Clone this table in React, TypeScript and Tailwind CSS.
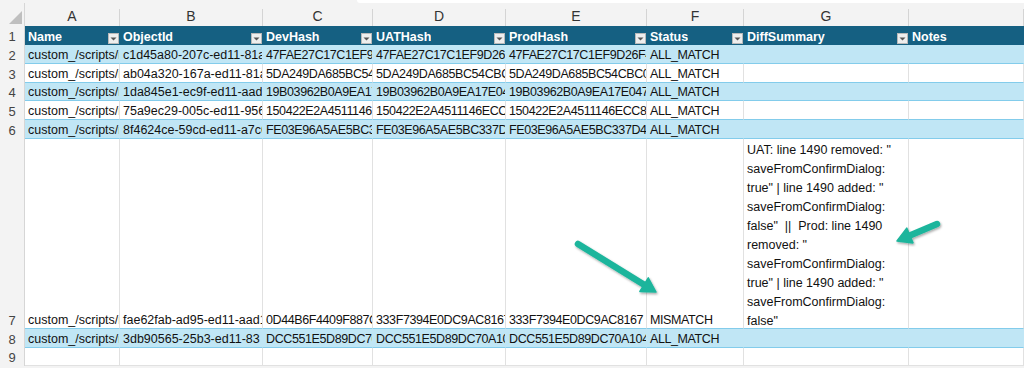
import React from 'react';

const COLS = 'grid grid-cols-[25px_95px_143px_110px_133px_141px_97px_165px_115px]';

const headers = ['Name', 'ObjectId', 'DevHash', 'UATHash', 'ProdHash', 'Status', 'DiffSummary', 'Notes'];
const letters = ['A', 'B', 'C', 'D', 'E', 'F', 'G', ''];

const diffLines = [
  'UAT: line 1490 removed: "',
  'saveFromConfirmDialog:',
  'true" | line 1490 added: "',
  'saveFromConfirmDialog:',
  'false"  ||  Prod: line 1490',
  'removed: "',
  'saveFromConfirmDialog:',
  'true" | line 1490 added: "',
  'saveFromConfirmDialog:',
  'false"',
];

type Row = { n: number; band: boolean; tall?: boolean; guid: string; dev: string; uat: string; prod: string; status: string };

const rows: Row[] = [
  { n: 2, band: true, guid: 'c1d45a80-207c-ed11-81ac', dev: '47FAE27C17C1EF9D', uat: '47FAE27C17C1EF9D26F', prod: '47FAE27C17C1EF9D26F4A', status: 'ALL_MATCH' },
  { n: 3, band: false, guid: 'ab04a320-167a-ed11-81ac', dev: '5DA249DA685BC54C', uat: '5DA249DA685BC54CBC', prod: '5DA249DA685BC54CBC0E', status: 'ALL_MATCH' },
  { n: 4, band: true, guid: '1da845e1-ec9f-ed11-aad1', dev: '19B03962B0A9EA17', uat: '19B03962B0A9EA17E04', prod: '19B03962B0A9EA17E047C', status: 'ALL_MATCH' },
  { n: 5, band: false, guid: '75a9ec29-005c-ed11-9562', dev: '150422E2A4511146', uat: '150422E2A4511146ECC', prod: '150422E2A4511146ECC8A', status: 'ALL_MATCH' },
  { n: 6, band: true, guid: '8f4624ce-59cd-ed11-a7c6', dev: 'FE03E96A5AE5BC33', uat: 'FE03E96A5AE5BC337D4', prod: 'FE03E96A5AE5BC337D4F1', status: 'ALL_MATCH' },
  { n: 7, band: false, tall: true, guid: 'fae62fab-ad95-ed11-aad1', dev: '0D44B6F4409F887C', uat: '333F7394E0DC9AC8167', prod: '333F7394E0DC9AC8167', status: 'MISMATCH' },
  { n: 8, band: true, guid: '3db90565-25b3-ed11-83', dev: 'DCC551E5D89DC70A', uat: 'DCC551E5D89DC70A10', prod: 'DCC551E5D89DC70A1047', status: 'ALL_MATCH' },
];

function FilterButton() {
  return (
    <div className="w-[11px] h-[11px] shrink-0 mr-[1px] mb-[1px] bg-[#eeeeee] border border-[#b9b9b9] flex items-center justify-center">
      <svg width="7" height="4" viewBox="0 0 7 4">
        <path d="M0.5 0.5 L6.5 0.5 L3.5 3.5 Z" fill="#555" />
      </svg>
    </div>
  );
}

function RowNum({ n, h }: { n: number | string; h: string }) {
  return (
    <div className={`${h} bg-[#f3f3f3] border-r border-[#d6d6d6] flex items-end justify-center text-[13px] leading-[16px] text-[#444]`}>
      {n}
    </div>
  );
}

function Cell({
  text,
  band,
  h,
  tight = false,
  bottom = 'border-b-[#83cceb]',
}: {
  text: React.ReactNode;
  band: boolean;
  h: string;
  tight?: boolean;
  bottom?: string;
}) {
  return (
    <div
      className={`${h} border-r border-b ${bottom} ${band ? 'bg-[#c0e6f5] border-r-transparent' : 'bg-white border-r-[#e1e1e1]'} ${tight ? 'tracking-[-0.4px]' : ''} flex items-end pl-[3px] overflow-hidden whitespace-nowrap text-[12.5px] leading-[16px] text-[#111]`}
    >
      {text}
    </div>
  );
}

function Arrow({ x1, y1, x2, y2 }: { x1: number; y1: number; x2: number; y2: number }) {
  const dx = x2 - x1;
  const dy = y2 - y1;
  const len = Math.hypot(dx, dy);
  const ux = dx / len;
  const uy = dy / len;
  const head = 14;
  const half = 8;
  const bx = x2 - ux * head;
  const by = y2 - uy * head;
  const pts = `${x2},${y2} ${bx - uy * half},${by + ux * half} ${bx + uy * half},${by - ux * half}`;
  return (
    <g filter="url(#shadow)">
      <line x1={x1} y1={y1} x2={bx + ux * 2} y2={by + uy * 2} stroke="#1db59c" strokeWidth="6.5" strokeLinecap="round" />
      <polygon points={pts} fill="#1db59c" strokeLinejoin="round" stroke="#1db59c" strokeWidth="1.5" />
    </g>
  );
}

export default function App() {
  return (
    <div className="w-[1024px] h-[368px] bg-white relative overflow-hidden font-['Liberation_Sans',Arial,sans-serif]">
      {/* formula bar edge */}
      <div className="h-[3px] bg-[#f3f3f3] flex">
        <div className="ml-[357px] flex-1 bg-white rounded-bl-[3px]" />
      </div>

      {/* column letters */}
      <div className={`${COLS} h-[23px] bg-[#f3f3f3]`}>
        <div className="flex items-end justify-end border-r border-[#d6d6d6] pr-[2px] pb-[3px]">
          <svg width="13" height="13" viewBox="0 0 13 13">
            <path d="M13 0 L13 13 L0 13 Z" fill="#bfbfbf" />
          </svg>
        </div>
        {letters.map((l, i) => (
          <div key={i} className="flex">
            <div className="flex-1 flex items-center justify-center pt-[3px] text-[14px] text-[#333]">{l}</div>
            <div className="w-px self-end h-[18px] bg-[#d4d4d4]" />
          </div>
        ))}
      </div>

      {/* table header row */}
      <div className={COLS}>
        <RowNum n={1} h="h-[19px]" />
        {headers.map((t, i) => (
          <div key={t} className="h-[19px] bg-[#156082] flex items-end justify-between pl-[3px] text-white font-bold text-[12.5px] leading-[16px] whitespace-nowrap overflow-hidden">
            <span className="overflow-hidden">{t}</span>
            {i < 7 && <FilterButton />}
          </div>
        ))}
      </div>

      {rows.map((r) => {
        const h = r.tall ? 'h-[190px]' : r.n === 4 ? 'h-[18px]' : 'h-[19px]';
        return (
          <div key={r.n} className={COLS}>
            <RowNum n={r.n} h={h} />
            <Cell h={h} band={r.band} text="custom_/scripts/m" />
            <Cell h={h} band={r.band} text={r.guid} />
            <Cell h={h} band={r.band} tight text={r.dev} />
            <Cell h={h} band={r.band} tight text={r.uat} />
            <Cell h={h} band={r.band} tight text={r.prod} />
            <Cell h={h} band={r.band} tight text={r.status} />
            {r.tall ? (
              <div className={`${h} border-r border-b border-b-[#83cceb] border-r-[#e1e1e1] bg-white flex flex-col justify-end pl-[3px] text-[12.5px] text-[#111] whitespace-pre`}>
                <div className="mb-[-3px]">
                  {diffLines.map((l, i) => (
                    <div key={i} className="leading-[19px]">{l}</div>
                  ))}
                </div>
              </div>
            ) : (
              <Cell h={h} band={r.band} text="" />
            )}
            <Cell h={h} band={r.band} text="" />
          </div>
        );
      })}

      {/* row 9, outside the table */}
      <div className={COLS}>
        <RowNum n={9} h="h-[18px]" />
        {letters.map((_, i) => (
          <Cell key={i} h="h-[18px]" band={false} text="" bottom="border-b-[#e1e1e1]" />
        ))}
      </div>
      <div className="h-[2px] bg-[#f3f3f3]" />

      {/* callout arrows */}
      <svg className="absolute inset-0 pointer-events-none" width="1024" height="368">
        <defs>
          <filter id="shadow" x="-20%" y="-20%" width="140%" height="140%">
            <feDropShadow dx="1" dy="1.5" stdDeviation="1" floodColor="#000" floodOpacity="0.35" />
          </filter>
        </defs>
        <Arrow x1={578} y1={244} x2={656} y2={292} />
        <Arrow x1={937} y1={224} x2={897} y2={241} />
      </svg>
    </div>
  );
}
